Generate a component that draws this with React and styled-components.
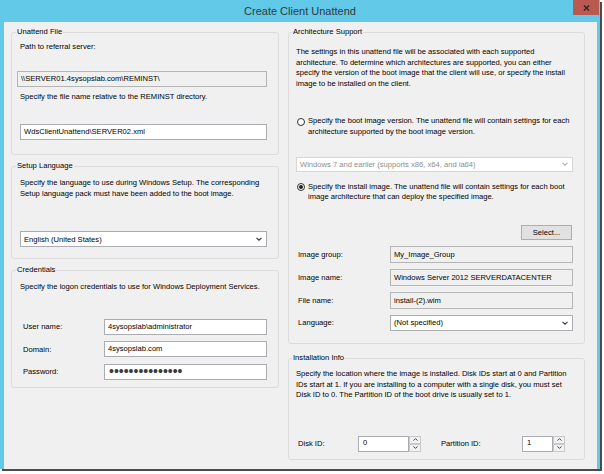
import React from 'react';
import styled, { createGlobalStyle } from 'styled-components';

const Global = createGlobalStyle`
  html, body { margin: 0; padding: 0; background: #ffffff; }
  body { font-family: "Liberation Sans", Arial, sans-serif; color: #000; }
  #root { width: 604px; height: 474px; }
`;

const Window = styled.div`
  width: 600px;
  height: 469px;
  box-sizing: border-box;
  background: #62c9e9;
  display: flex;
  flex-direction: column;
  box-shadow: 2px 2px 0 #4b4b4b;
`;

const TitleBar = styled.div`
  height: 22px;
  flex: none;
  display: grid;
  grid-template-columns: 1fr auto 1fr;
  align-items: center;
`;

const Title = styled.div`
  grid-column: 2;
  font-size: 11px;
  color: #2f3a40;
  line-height: 14px;
  margin-top: -1px;
`;

const CloseButton = styled.div`
  grid-column: 3;
  justify-self: end;
  align-self: start;
  width: 26px;
  height: 15px;
  margin-right: 1px;
  background: #b9594f;
  display: flex;
  align-items: center;
  justify-content: center;
`;

const Content = styled.div`
  flex: 1;
  margin: 0 3px 0 4px;
  background: #f0f0f0;
  display: grid;
  grid-template-columns: 268px 297px;
  column-gap: 9px;
  padding: 5px 0 0 7px;
  align-items: start;
`;

const Column = styled.div`
  display: flex;
  flex-direction: column;
  gap: ${p => p.$gap}px;
`;

const Group = styled.fieldset`
  margin: 0;
  padding: 0 ${p => p.$pr}px 0 ${p => p.$pl}px;
  border: 1px solid #dcdcdc;
  border-radius: 3px;
  height: ${p => p.$h}px;
  box-sizing: border-box;
  min-width: 0;
  display: flex;
  flex-direction: column;
  align-items: stretch;
`;

const Legend = styled.legend`
  font-size: 7.6px;
  line-height: 10px;
  padding: 0 1px;
  margin-left: -4px;
  color: #000;
`;

const Text = styled.p`
  margin: ${p => p.$mt || 0}px 0 0 ${p => p.$ml || 0}px;
  font-size: 7.6px;
  line-height: 10.5px;
  color: #000;
`;

const Box = styled.div`
  margin-top: ${p => p.$mt || 0}px;
  margin-left: ${p => p.$ml || 0}px;
  height: ${p => p.$h || 16}px;
  box-sizing: border-box;
  border: 1px solid ${p => (p.$readOnly ? '#b5b5b5' : '#abadb3')};
  background: ${p => (p.$readOnly ? '#f0f0f0' : '#ffffff')};
  font-size: 7.6px;
  line-height: ${p => (p.$h || 16) - 2}px;
  padding: 0 3px;
  white-space: nowrap;
  overflow: hidden;
  color: #000;
`;

const Password = styled(Box)`
  font-size: 14px;
  line-height: 13px;
  letter-spacing: 0;
  padding-left: 4px;
  color: #3a3a3a;
`;

const SelectBox = styled.div`
  margin-top: ${p => p.$mt || 0}px;
  height: ${p => p.$h || 16}px;
  box-sizing: border-box;
  border: 1px solid ${p => (p.$disabled ? '#d6d6d6' : '#abadb3')};
  background: #ffffff;
  display: flex;
  align-items: center;
  justify-content: space-between;
  padding: 0 4px 0 3px;
  font-size: 7.6px;
  color: ${p => (p.$disabled ? '#8d8d8d' : '#000')};
  white-space: nowrap;
`;

const Chevron = ({ color = '#333' }) => (
  <svg width="6" height="4" viewBox="0 0 6 4">
    <path d="M0.5 0.8 L3 3.2 L5.5 0.8" fill="none" stroke={color} strokeWidth="1.1" />
  </svg>
);

const Select = ({ children, disabled, mt, h }) => (
  <SelectBox $disabled={disabled} $mt={mt} $h={h}>
    <span>{children}</span>
    <Chevron color={disabled ? '#b0b0b0' : '#333'} />
  </SelectBox>
);

const FormGrid = styled.div`
  margin-top: ${p => p.$mt}px;
  display: grid;
  grid-template-columns: ${p => p.$label}px 1fr;
  row-gap: ${p => p.$gap}px;
  align-items: center;
`;

const Label = styled.div`
  font-size: 7.6px;
  padding-left: ${p => p.$pl || 0}px;
  color: #000;
  white-space: nowrap;
`;

const RadioRow = styled.div`
  margin-top: ${p => p.$mt}px;
  display: flex;
  align-items: flex-start;
  gap: 3px;
  padding-left: 1px;
`;

const RadioCircle = styled.span`
  flex: none;
  width: 8px;
  height: 8px;
  margin-top: 1.5px;
  box-sizing: border-box;
  border: 1px solid #333;
  border-radius: 50%;
  background: #fff;
  display: flex;
  align-items: center;
  justify-content: center;
  &::after {
    content: '';
    display: ${p => (p.$checked ? 'block' : 'none')};
    width: 4px;
    height: 4px;
    border-radius: 50%;
    background: #222;
  }
`;

const ButtonRow = styled.div`
  margin-top: ${p => p.$mt}px;
  display: flex;
  justify-content: flex-end;
  padding-right: 1px;
`;

const Button = styled.div`
  width: 51px;
  height: 15px;
  box-sizing: border-box;
  border: 1px solid #adadad;
  background: #e1e1e1;
  font-size: 7.6px;
  display: flex;
  align-items: center;
  justify-content: center;
  color: #000;
`;

const SpinRow = styled.div`
  margin-top: ${p => p.$mt}px;
  display: flex;
  align-items: center;
  padding-left: 1px;
`;

const SpinLabel = styled.div`
  font-size: 7.6px;
  width: ${p => p.$w}px;
  margin-left: ${p => p.$ml || 0}px;
  color: #000;
`;

const Spin = styled.div`
  display: flex;
  height: 16px;
  width: ${p => p.$w}px;
`;

const SpinInput = styled.div`
  flex: 1;
  box-sizing: border-box;
  border: 1px solid #abadb3;
  background: #fff;
  font-size: 7.6px;
  line-height: 12px;
  padding: 0 4px;
`;

const SpinArrows = styled.div`
  width: 12px;
  display: flex;
  flex-direction: column;
`;

const SpinButton = styled.div`
  flex: 1;
  box-sizing: border-box;
  border: 1px solid #c9c9c9;
  background: #f2f2f2;
  display: flex;
  align-items: center;
  justify-content: center;
`;

const Arrow = ({ up }) => (
  <svg width="5" height="3" viewBox="0 0 5 3">
    <path d={up ? 'M0.5 2.6 L2.5 0.6 L4.5 2.6' : 'M0.5 0.4 L2.5 2.4 L4.5 0.4'} fill="none" stroke="#444" strokeWidth="1" />
  </svg>
);

const SpinBox = ({ value, w }) => (
  <Spin $w={w}>
    <SpinInput>{value}</SpinInput>
    <SpinArrows>
      <SpinButton><Arrow up /></SpinButton>
      <SpinButton><Arrow /></SpinButton>
    </SpinArrows>
  </Spin>
);

const SERVER_PATH = '\\\\SERVER01.4sysopslab.com\\REMINST\\';
const FILE_NAME = 'WdsClientUnattend\\SERVER02.xml';
const USER_NAME = '4sysopslab\\administrator';

export default function App() {
  return (
    <>
      <Global />
      <Window>
        <TitleBar>
          <Title>Create Client Unattend</Title>
          <CloseButton>
            <svg width="7" height="6" viewBox="0 0 7 6">
              <path d="M1 0.5 L6 5.5 M6 0.5 L1 5.5" stroke="#3b2a28" strokeWidth="1.6" />
            </svg>
          </CloseButton>
        </TitleBar>
        <Content>
          <Column $gap={6}>
            <Group $h={128} $pl={8} $pr={11}>
              <Legend>Unattend File</Legend>
              <Text $mt={5}>Path to referral server:</Text>
              <Box $readOnly $mt={18.5} $ml={-3}>{SERVER_PATH}</Box>
              <Text $mt={5}>Specify the file name relative to the REMINST directory.</Text>
              <Box $mt={21.5}>{FILE_NAME}</Box>
            </Group>
            <Group $h={98} $pl={8} $pr={11}>
              <Legend>Setup Language</Legend>
              <Text $mt={7}>
                Specify the language to use during Windows Setup. The corresponding
                Setup language pack must have been added to the boot image.
              </Text>
              <Select mt={32}>English (United States)</Select>
            </Group>
            <Group $h={123} $pl={8} $pr={11}>
              <Legend>Credentials</Legend>
              <Text $mt={6.5}>Specify the logon credentials to use for Windows Deployment Services.</Text>
              <FormGrid $mt={26.5} $label={84} $gap={6.5}>
                <Label $pl={3}>User name:</Label>
                <Box>{USER_NAME}</Box>
                <Label $pl={3}>Domain:</Label>
                <Box>4sysopslab.com</Box>
                <Label $pl={3}>Password:</Label>
                <Password>•••••••••••••••</Password>
              </FormGrid>
            </Group>
          </Column>
          <Column $gap={9}>
            <Group $h={317} $pl={7} $pr={11}>
              <Legend>Architecture Support</Legend>
              <Text $mt={10}>
                The settings in this unattend file will be associated with each supported
                architecture. To determine which architectures are supported, you can either
                specify the version of the boot image that the client will use, or specify the install
                image to be installed on the client.
              </Text>
              <RadioRow $mt={27}>
                <RadioCircle />
                <Text>
                  Specify the boot image version. The unattend file will contain settings for each
                  architecture supported by the boot image version.
                </Text>
              </RadioRow>
              <Select disabled mt={19.5} h={15}>Windows 7 and earlier (supports x86, x64, and ia64)</Select>
              <RadioRow $mt={10}>
                <RadioCircle $checked />
                <Text>
                  Specify the install image. The unattend file will contain settings for each boot
                  image architecture that can deploy the specified image.
                </Text>
              </RadioRow>
              <ButtonRow $mt={22.5}>
                <Button>Select...</Button>
              </ButtonRow>
              <FormGrid $mt={5.5} $label={94} $gap={6}>
                <Label $pl={2}>Image group:</Label>
                <Box $readOnly $h={17}>My_Image_Group</Box>
                <Label $pl={2}>Image name:</Label>
                <Box $readOnly $h={17}>Windows Server 2012 SERVERDATACENTER</Box>
                <Label $pl={2}>File name:</Label>
                <Box $readOnly $h={17}>install-(2).wim</Box>
                <Label $pl={2}>Language:</Label>
                <Select h={16}>(Not specified)</Select>
              </FormGrid>
            </Group>
            <Group $h={107} $pl={7} $pr={11}>
              <Legend>Installation Info</Legend>
              <Text $mt={6}>
                Specify the location where the image is installed. Disk IDs start at 0 and Partition
                IDs start at 1. If you are installing to a computer with a single disk, you must set
                Disk ID to 0. The Partition ID of the boot drive is usually set to 1.
              </Text>
              <SpinRow $mt={35}>
                <SpinLabel $w={60} $ml={1}>Disk ID:</SpinLabel>
                <SpinBox value="0" w={63} />
                <SpinLabel $w={81} $ml={20}>Partition ID:</SpinLabel>
                <SpinBox value="1" w={43} />
              </SpinRow>
            </Group>
          </Column>
        </Content>
      </Window>
    </>
  );
}
